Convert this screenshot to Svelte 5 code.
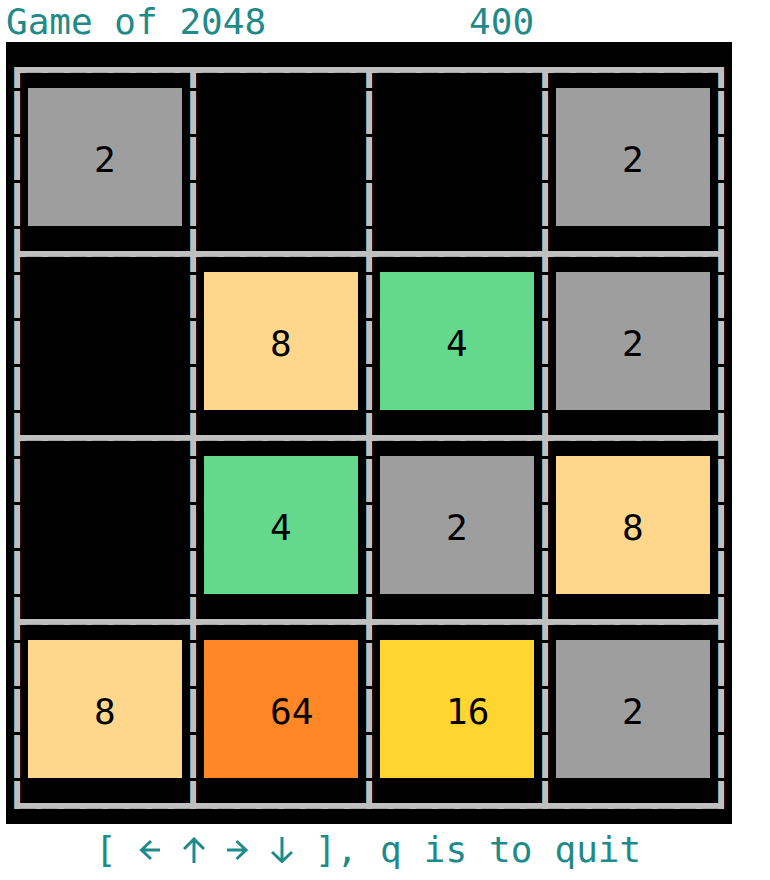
<script>
  const score = 400;
  const board = [
    [2, 0, 0, 2],
    [0, 8, 4, 2],
    [0, 4, 2, 8],
    [8, 64, 16, 2]
  ];
  const keys = [
    { name: 'Left', path: 'M21 13H2M12 4L2.5 13L12 22' },
    { name: 'Up', path: 'M11 26V2M1 12L11 2L21 12' },
    { name: 'Right', path: 'M0 13H19M9.5 4L19 13L9.5 22' },
    { name: 'Down', path: 'M11 0V24M1 15L11 24.500L21 15' }
  ];
  const words = ['q', 'is', 'to', 'quit'];
</script>

<main>
  <header>
    <h1>Game of 2048</h1>
    <output>{score}</output>
  </header>

  <section class="board" aria-label="Board">
    <div class="grid">
      {#each board.flat() as value}
        <div class="cell">
          {#if value}
            <div class="tile v{value}">{value}</div>
          {/if}
        </div>
      {/each}
    </div>
  </section>

  <footer>
    <span>[</span>
    {#each keys as key}
      <kbd>
        <svg viewBox="0 0 22 26" width="22" height="26" role="img" aria-label={key.name}>
          <path d={key.path} />
        </svg>
      </kbd>
    {/each}
    <span>],</span>
    {#each words as word}
      <span>{word}</span>
    {/each}
  </footer>
</main>

<style>
  :global(body) {
    margin: 0;
    background: #fff;
  }

  main {
    padding: 0 38px 0 6px;
    color: #1f8a8a;
    font: 36px/42px "DejaVu Sans Mono", monospace;
  }

  header {
    display: flex;
    gap: 203px;
    height: 42px;
    line-height: 44px;
    white-space: nowrap;
  }

  h1 {
    margin: 0;
    font: inherit;
  }

  .board {
    padding: 25px 8px 15px;
    background: #000;
  }

  .grid {
    --dash: repeating-linear-gradient(to right, #bfbfbf 0 6px, #a2a2a2 6px 22px);
    position: relative;
    display: grid;
    grid-template-columns: repeat(4, 1fr);
    gap: 6px;
    padding: 6px;
    background: var(--dash) bottom / 100% 1px no-repeat #bfbfbf;
    box-shadow: 1px 0 #3d0c08, inset 1px 0 #76a6ba;
  }

  /* breaks between the terminal rows of the vertical rules */
  .grid::after {
    content: "";
    position: absolute;
    inset: 0 -1px 0 0;
    background: repeating-linear-gradient(transparent 0 21px, #000 21px 24px, transparent 24px 46px);
  }

  .cell {
    position: relative;
    padding: 15px 8px 25px;
    min-height: 138px;
    background: #000;
    box-shadow: inset 1px 0 #3d0c08, 1px 0 #76a6ba;
  }

  .cell::before {
    content: "";
    position: absolute;
    inset: -1px 0 auto;
    height: 1px;
    background: var(--dash);
  }

  .tile {
    position: relative;
    z-index: 1;
    box-sizing: border-box;
    height: 138px;
    padding-left: 66px;
    color: #000;
    line-height: 144px;
  }

  .v2 { background: #9e9e9e; }
  .v4 { background: #64d88b; }
  .v8 { background: #ffd78c; }
  .v16 { background: #ffd530; }
  .v64 { background: #ff8726; }

  footer {
    display: flex;
    gap: 22px;
    padding: 5px 0 0 89px;
    white-space: nowrap;
  }

  kbd {
    display: flex;
    align-items: center;
    font: inherit;
  }

  svg {
    fill: none;
    stroke: currentColor;
    stroke-width: 3;
  }
</style>
